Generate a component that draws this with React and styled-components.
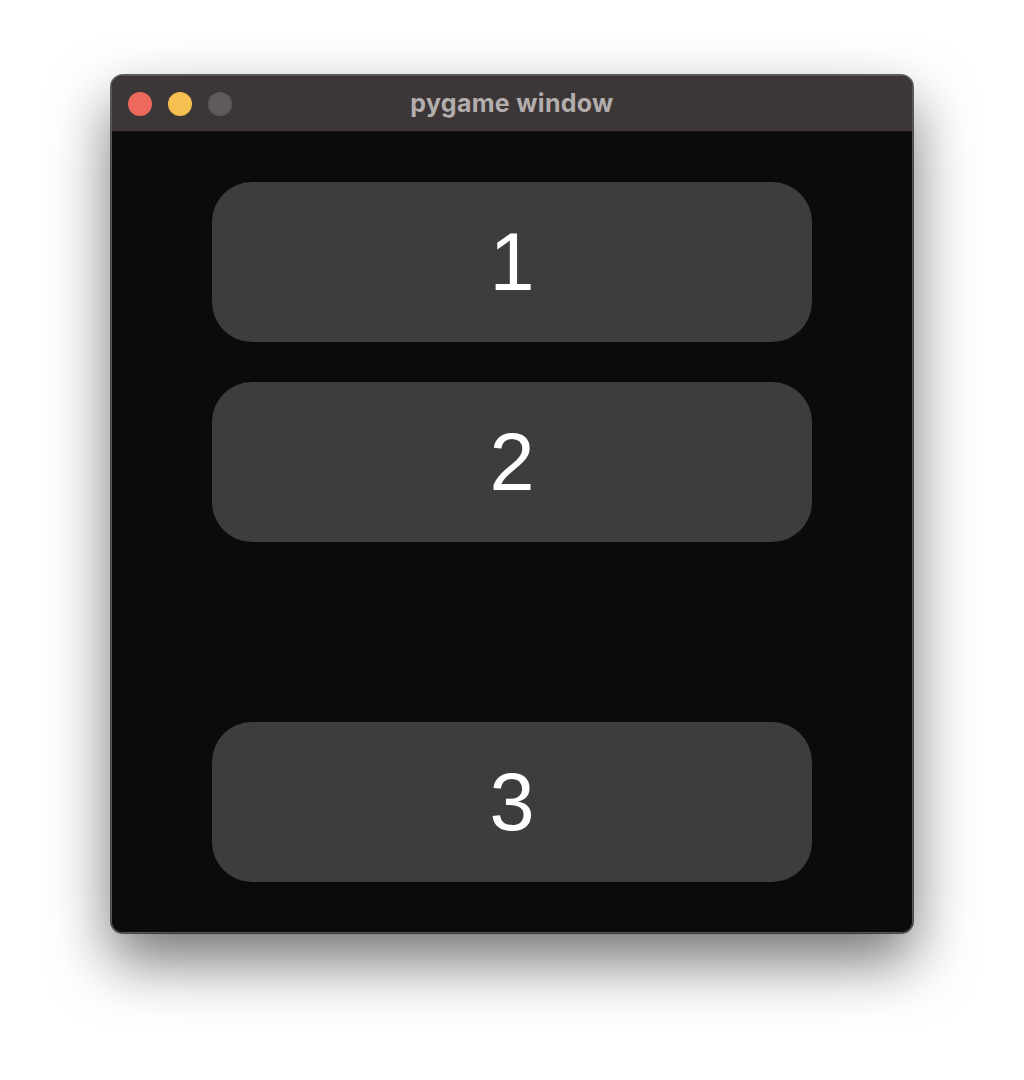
import React from "react";
import styled, { createGlobalStyle } from "styled-components";

const Global = createGlobalStyle`
  html, body { margin: 0; padding: 0; background: #ffffff; }
  body { font-family: "Liberation Sans", Arial, sans-serif; }
`;

const Page = styled.div`
  width: 1024px;
  height: 1080px;
  display: flex;
  justify-content: center;
  padding-top: 75px;
  box-sizing: border-box;
  overflow: hidden;
`;

const Window = styled.div`
  width: 802px;
  height: 858px;
  box-sizing: border-box;
  border: 1px solid #5a5656;
  border-radius: 12px;
  overflow: hidden;
  display: flex;
  flex-direction: column;
  background: #0b0b0b;
  box-shadow: 0 28px 60px rgba(0, 0, 0, 0.55), 0 0 0 1px rgba(0, 0, 0, 0.6);
`;

const TitleBar = styled.div`
  height: 56px;
  flex: 0 0 56px;
  background: #3d3636;
  display: flex;
  align-items: center;
  position: relative;
  padding-left: 16px;
  gap: 16px;
  border-bottom: 1px solid #1a1818;
  box-sizing: border-box;
`;

const Light = styled.span`
  width: 24px;
  height: 24px;
  border-radius: 50%;
  background: ${(p) => p.$color};
  display: block;
`;

const Title = styled.div`
  position: absolute;
  left: 0;
  right: 0;
  top: 0;
  bottom: 2px;
  display: flex;
  align-items: center;
  justify-content: center;
  font-family: Inter, "Liberation Sans", sans-serif;
  font-weight: 700;
  font-size: 25px;
  color: #b3aeae;
  pointer-events: none;
  letter-spacing: 0.3px;
`;

const Content = styled.div`
  flex: 1;
  display: flex;
  flex-direction: column;
  align-items: center;
  padding-top: 50px;
  background: #0b0b0b;
`;

const Button = styled.div`
  width: 600px;
  height: 160px;
  border-radius: 40px;
  background: #3d3d3d;
  display: flex;
  align-items: center;
  justify-content: center;
  color: #ffffff;
  font-family: "Liberation Sans", Arial, sans-serif;
  font-size: 81px;
  margin-top: ${(p) => p.$gap || 0}px;
`;

export default function App() {
  return (
    <>
      <Global />
      <Page>
        <Window>
          <TitleBar>
            <Light $color="#ef6a5e" />
            <Light $color="#f5c04f" />
            <Light $color="#5f5959" />
            <Title>pygame window</Title>
          </TitleBar>
          <Content>
            <Button>1</Button>
            <Button $gap={40}>2</Button>
            <Button $gap={180}>3</Button>
          </Content>
        </Window>
      </Page>
    </>
  );
}
